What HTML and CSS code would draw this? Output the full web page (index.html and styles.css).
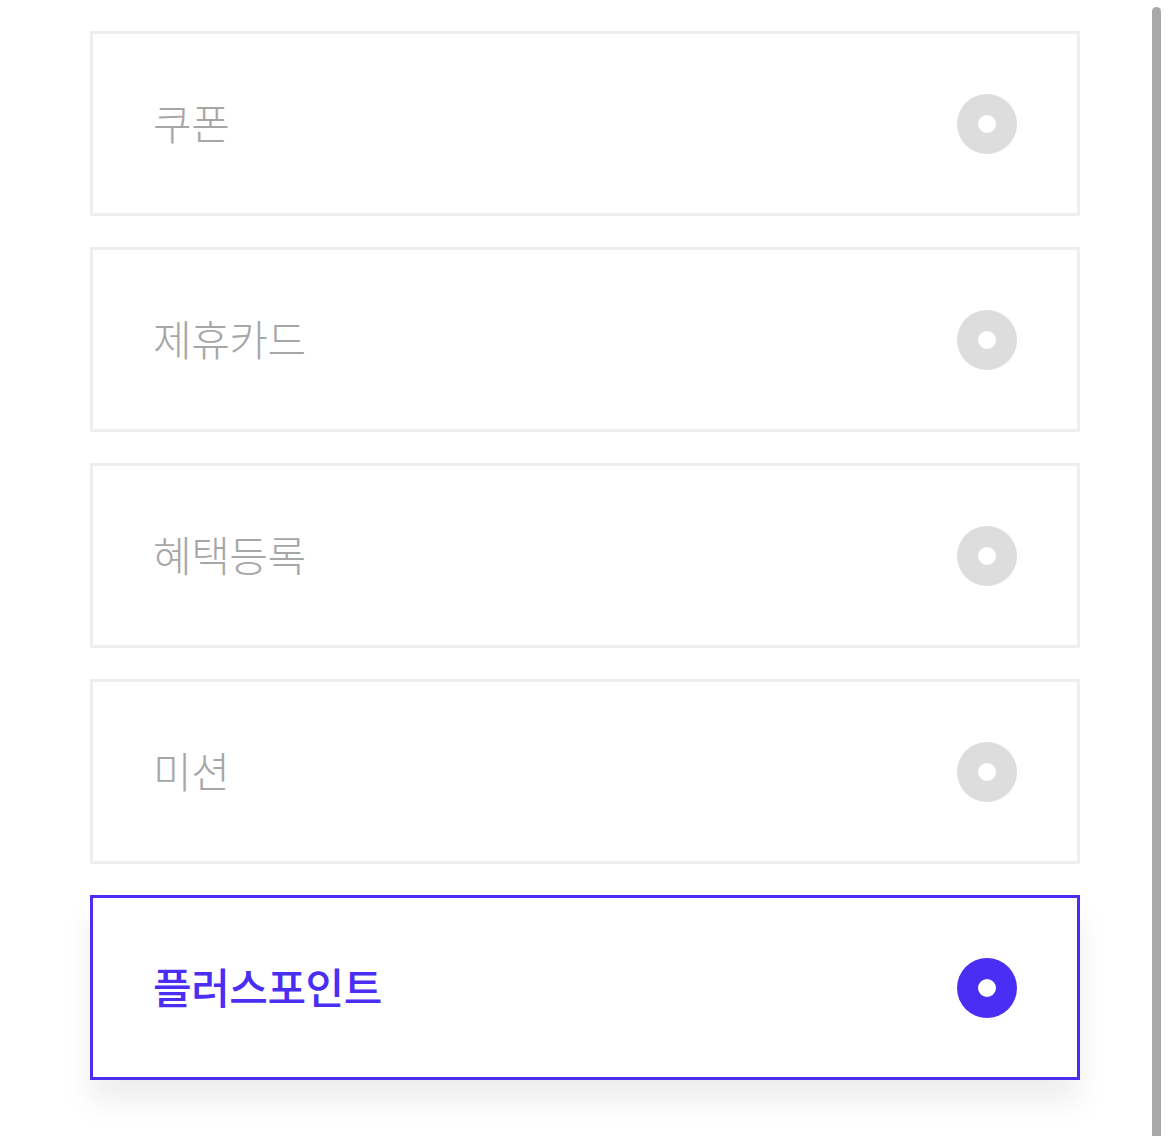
FILE: index.html
```html
<!DOCTYPE html>
<html lang="ko">
<head>
<meta charset="utf-8">
<link rel="stylesheet" href="styles.css">
</head>
<body>
<main class="list">
  <div class="option"><span class="label">쿠폰</span><span class="radio"></span></div>
  <div class="option"><span class="label">제휴카드</span><span class="radio"></span></div>
  <div class="option"><span class="label">혜택등록</span><span class="radio"></span></div>
  <div class="option"><span class="label">미션</span><span class="radio"></span></div>
  <div class="option active"><span class="label">플러스포인트</span><span class="radio"></span></div>
</main>
<div class="scrollbar"></div>
</body>
</html>
```
FILE: styles.css
```css
html, body {
  margin: 0;
  padding: 0;
  background: #fff;
  height: 100%;
  overflow: hidden;
}
body {
  font-family: "Noto Sans CJK KR", "Noto Sans", sans-serif;
  position: relative;
}
.list {
  display: flex;
  flex-direction: column;
  gap: 31px;
  width: 990px;
  padding: 31px 0 0 90px;
}
.option {
  box-sizing: border-box;
  height: 185px;
  border: 3px solid #eeeeee;
  background: #fff;
  display: flex;
  align-items: center;
  justify-content: space-between;
  padding: 0 60px;
}
.label {
  font-size: 42px;
  letter-spacing: -0.5px;
  color: #a6a6a6;
  font-weight: 300;
  line-height: 1;
  margin-bottom: 4px;
}
.radio {
  width: 60px;
  height: 60px;
  border-radius: 50%;
  background: #dddddd;
  display: flex;
  align-items: center;
  justify-content: center;
}
.radio::after {
  content: "";
  width: 18px;
  height: 18px;
  border-radius: 50%;
  background: #fff;
}
.option.active {
  border-color: #4a2ef4;
  box-shadow: 0 22px 30px rgba(0, 0, 0, 0.07);
}
.option.active .label {
  color: #4a2ef4;
  font-weight: 500;
}
.option.active .radio {
  background: #4a2ef4;
}
.scrollbar {
  position: absolute;
  top: 7px;
  right: 9px;
  width: 9px;
  height: 1140px;
  border-radius: 5px 5px 0 0;
  background: #a8a8a8;
}
```
